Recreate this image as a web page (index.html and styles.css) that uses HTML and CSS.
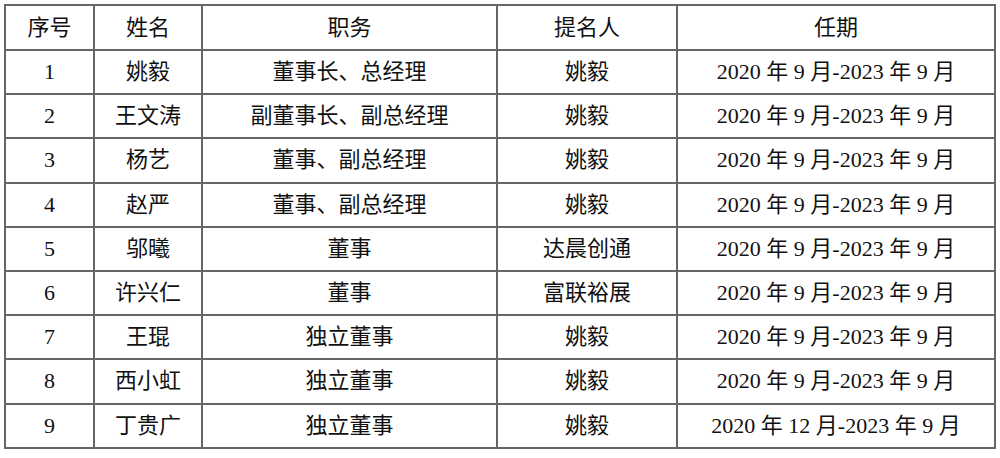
FILE: index.html
```html
<!DOCTYPE html>
<html lang="zh">
<head>
<meta charset="utf-8">
<link rel="stylesheet" href="styles.css">
</head>
<body>
<div class="wrap">
<table class="tbl">
  <colgroup>
    <col class="c1"><col class="c2"><col class="c3"><col class="c4"><col class="c5">
  </colgroup>
  <thead>
    <tr class="head"><th>序号</th><th>姓名</th><th>职务</th><th>提名人</th><th>任期</th></tr>
  </thead>
  <tbody>
    <tr><td>1</td><td>姚毅</td><td>董事长、总经理</td><td>姚毅</td><td>2020 年 9 月-2023 年 9 月</td></tr>
    <tr><td>2</td><td>王文涛</td><td>副董事长、副总经理</td><td>姚毅</td><td>2020 年 9 月-2023 年 9 月</td></tr>
    <tr><td>3</td><td>杨艺</td><td>董事、副总经理</td><td>姚毅</td><td>2020 年 9 月-2023 年 9 月</td></tr>
    <tr><td>4</td><td>赵严</td><td>董事、副总经理</td><td>姚毅</td><td>2020 年 9 月-2023 年 9 月</td></tr>
    <tr><td>5</td><td>邬曦</td><td>董事</td><td>达晨创通</td><td>2020 年 9 月-2023 年 9 月</td></tr>
    <tr><td>6</td><td>许兴仁</td><td>董事</td><td>富联裕展</td><td>2020 年 9 月-2023 年 9 月</td></tr>
    <tr><td>7</td><td>王琨</td><td>独立董事</td><td>姚毅</td><td>2020 年 9 月-2023 年 9 月</td></tr>
    <tr><td>8</td><td>西小虹</td><td>独立董事</td><td>姚毅</td><td>2020 年 9 月-2023 年 9 月</td></tr>
    <tr><td>9</td><td>丁贵广</td><td>独立董事</td><td>姚毅</td><td>2020 年 12 月-2023 年 9 月</td></tr>
  </tbody>
</table>
</div>
</body>
</html>
```

FILE: styles.css
```css
html, body {
  margin: 0;
  padding: 0;
  background: #fff;
}
.wrap {
  padding: 4px 0 0 4px;
}
.tbl {
  border-collapse: collapse;
  width: 990px;
  table-layout: fixed;
  font-family: "Liberation Serif", "Noto Sans CJK SC", serif;
  font-size: 22px;
  color: #111;
}
.c1 { width: 89px; }
.c2 { width: 108px; }
.c3 { width: 295px; }
.c4 { width: 180px; }
.c5 { width: 318px; }
.tbl th, .tbl td {
  border: 2px solid #666;
  text-align: center;
  vertical-align: middle;
  padding: 0;
  height: 42.2px;
  line-height: 26px;
  white-space: nowrap;
}
.tbl th {
  font-weight: 400;
  height: 43px;
}
```
